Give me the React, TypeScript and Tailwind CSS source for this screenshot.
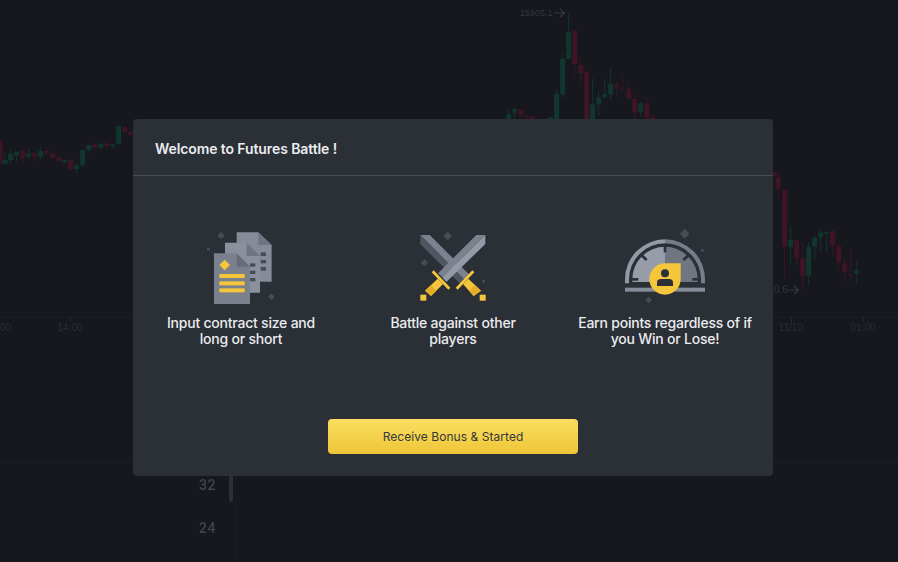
const GREEN = '#113630';
const RED = '#3f1424';

type Candle = [number, number, number, number, number, 'g' | 'r'];

// all candles as [x, wickTop, wickBottom, bodyTop, bodyBottom, colour], read off the 3x crops
const left: Candle[] = [
  [0, 423, 492, 423, 490, 'r'], [15, 460, 492, 480, 492, 'g'], [32, 447, 490, 462, 480, 'g'], [50, 455, 488, 455, 467, 'g'],
  [68, 445, 490, 453, 476, 'r'], [86, 447, 475, 462, 470, 'g'], [104, 460, 483, 460, 470, 'r'], [122, 438, 478, 453, 470, 'g'],
  [140, 442, 462, 453, 460, 'r'], [158, 455, 475, 460, 474, 'r'], [176, 465, 485, 474, 484, 'r'], [194, 480, 490, 480, 486, 'g'],
  [212, 478, 512, 478, 507, 'r'], [230, 490, 518, 497, 507, 'g'], [248, 450, 497, 450, 496, 'g'], [266, 435, 458, 435, 450, 'g'],
  [284, 425, 445, 433, 443, 'r'], [302, 431, 443, 431, 443, 'g'], [320, 422, 445, 430, 438, 'r'], [338, 432, 447, 432, 436, 'g'],
  [356, 378, 431, 378, 431, 'g'], [374, 378, 398, 382, 396, 'r'], [392, 396, 410, 396, 404, 'r'],
];

const top: Candle[] = [
  [26, 330, 357, 343, 357, 'g'], [44, 325, 357, 327, 338, 'g'], [62, 328, 352, 328, 345, 'r'], [80, 345, 357, 347, 350, 'r'],
  [98, 349, 357, 349, 357, 'r'], [152, 352, 357, 352, 357, 'g'], [170, 270, 357, 282, 357, 'g'], [188, 162, 295, 177, 283, 'g'],
  [206, 40, 177, 96, 177, 'g'], [224, 92, 230, 92, 193, 'r'], [242, 172, 260, 195, 219, 'r'], [260, 208, 357, 216, 357, 'r'],
  [278, 235, 357, 313, 357, 'g'], [296, 275, 348, 293, 313, 'g'], [314, 238, 296, 282, 291, 'g'], [332, 202, 302, 252, 282, 'g'],
  [350, 245, 292, 252, 262, 'r'], [368, 228, 270, 265, 267, 'r'], [386, 243, 297, 267, 295, 'r'], [404, 280, 355, 297, 338, 'r'],
  [422, 305, 352, 310, 335, 'g'], [440, 290, 357, 310, 355, 'r'], [458, 342, 357, 352, 357, 'r'],
];

const right: Candle[] = [
  [42, 5, 20, 5, 20, 'r'], [55, 10, 90, 23, 57, 'r'], [74, 58, 325, 58, 230, 'r'], [92, 168, 285, 210, 230, 'g'], [110, 210, 292, 210, 263, 'r'],
  [128, 218, 358, 265, 320, 'r'], [146, 215, 347, 230, 317, 'g'], [164, 195, 265, 203, 230, 'g'], [182, 175, 248, 188, 202, 'g'],
  [200, 186, 248, 186, 190, 'g'], [218, 183, 260, 183, 227, 'r'], [236, 215, 298, 228, 277, 'r'], [254, 262, 335, 280, 307, 'r'],
  [272, 238, 340, 313, 315, 'r'], [290, 275, 342, 302, 311, 'g'],
];

function Candles({ data, ox, oy }: { data: Candle[]; ox: number; oy: number }) {
  return (
    <g>
      {data.map(([x, wt, wb, bt, bb, c], i) => {
        const fill = c === 'g' ? GREEN : RED;
        const cx = ox + x / 3;
        return (
          <g key={i} fill={fill}>
            <rect x={cx - 0.5} y={oy + wt / 3} width={1} height={(wb - wt) / 3} />
            <rect x={cx - 2.5} y={oy + bt / 3} width={5} height={Math.max((bb - bt) / 3, 1)} />
          </g>
        );
      })}
    </g>
  );
}

function ChartBackdrop() {
  return (
    <svg className="absolute inset-0 blur-[0.4px]" width={898} height={562} viewBox="0 0 898 562">
      <rect x={0} y={317} width={898} height={1} fill="#1b1e23" />
      <rect x={0} y={463} width={898} height={1} fill="#1a1c21" />
      <rect x={235} y={464} width={1} height={98} fill="#1a1c21" />
      <rect x={70} y={318} width={1} height={4} fill="#25282e" />
      <rect x={791} y={318} width={1} height={4} fill="#25282e" />
      <rect x={863} y={318} width={1} height={4} fill="#25282e" />
      <Candles data={left} ox={0} oy={0} />
      <Candles data={top} ox={500} oy={0} />
      <Candles data={right} ox={760} oy={170} />
      <g fontFamily="'Liberation Sans', sans-serif" fontSize={10} fill="#2a2d33">
        <text x={70} y={331} textAnchor="middle">14:00</text>
        <text x={0} y={331}>00</text>
        <text x={791} y={331} textAnchor="middle">11/10</text>
        <text x={863} y={331} textAnchor="middle">01:00</text>
      </g>
      <g fontFamily="'Liberation Sans', sans-serif" fill="#35383e">
        <text x={520} y={16} fontSize={9}>15905.1</text>
        <text x={774} y={293} fontSize={10}>0.6</text>
      </g>
      <g stroke="#35383e" strokeWidth={1.2} fill="none">
        <path d="M554 13h10M560 9l4.500 4-4.500 4" />
        <path d="M788 290h10M794 286l4.500 4-4.500 4" />
      </g>
      <g fontFamily="Roboto, sans-serif" fontSize={14} fontWeight={500} fill="#40444c" letterSpacing={0.6}>
        <text x={199} y={490}>32</text>
        <text x={199} y={533}>24</text>
      </g>
      <rect x={229} y={470} width={4} height={32} rx={2} fill="#2b2f36" />
    </svg>
  );
}

function Diamond({ x, y, r }: { x: number; y: number; r: number }) {
  return <path d={`M${x} ${y - r}L${x + r} ${y}L${x} ${y + r}L${x - r} ${y}Z`} fill="#474d57" />;
}

function DocsIcon() {
  return (
    <svg width={100} height={90} viewBox="3 0 300 270">
      <Diamond x={93} y={47} r={11} />
      <rect x={51} y={84} width={8} height={8} fill="#474d57" />
      <Diamond x={244} y={230} r={10} />
      <path d="M140 37H205L245 75V185H140Z" fill="#858b97" />
      <path d="M205 37L245 75H205Z" fill="#6e7480" />
      <rect x={212} y={97} width={16} height={11} fill="#474d57" />
      <rect x={212} y={120} width={16} height={10} fill="#474d57" />
      <rect x={212} y={141} width={16} height={11} fill="#474d57" />
      <path d="M105 68H170L210 108V218H105Z" fill="#8b919c" />
      <path d="M170 68L210 108H170Z" fill="#6e7480" />
      <rect x={180} y={130} width={16} height={10} fill="#474d57" />
      <rect x={180} y={152} width={16} height={10} fill="#474d57" />
      <rect x={180} y={174} width={16} height={10} fill="#474d57" />
      <path d="M72 100H140L180 140V252H72Z" fill="#7a818d" />
      <path d="M140 100L180 140H140Z" fill="#666c78" />
      <path d="M104 119L120 135L104 151L88 135Z" fill="#f5c63c" />
      <rect x={88} y={162} width={76} height={12} fill="#f5c63c" />
      <rect x={88} y={184} width={76} height={12} fill="#f5c63c" />
      <rect x={88} y={205} width={76} height={12} fill="#f5c63c" />
    </svg>
  );
}

function SwordsIcon() {
  return (
    <svg width={100} height={90} viewBox="0 0 300 270">
      <Diamond x={134} y={48} r={13} />
      <Diamond x={64} y={128} r={11} />
      <rect x={238} y={179} width={8} height={8} fill="#474d57" />
      {/* blade going down to the right, sits behind */}
      <path d="M52 45H80L200 165L185 180Z" fill="#7b828e" />
      <path d="M52 45L185 180L172 192L52 72Z" fill="#4f5561" />
      {/* blade going down to the left */}
      <path d="M220 45H247L118 172L105 160Z" fill="#7b828e" />
      <path d="M247 45V72L130 186L118 172Z" fill="#959ba6" />
      {/* hilts */}
      <path d="M92 151L142 203L136 209L86 157Z" fill="#f5c63c" />
      <path d="M104 176L120 192L84 228L66 212Z" fill="#f5c63c" />
      <path d="M84 196L100 212L84 228L66 212Z" fill="#e5ae2a" />
      <rect x={52} y={224} width={18} height={18} fill="#f5c63c" />
      <path d="M208 151L158 203L164 209L214 157Z" fill="#f5c63c" />
      <path d="M196 176L180 192L212 228L234 212Z" fill="#f5c63c" />
      <path d="M216 196L198 212L212 228L234 212Z" fill="#e5ae2a" />
      <rect x={230} y={224} width={18} height={18} fill="#f5c63c" />
    </svg>
  );
}

function GaugeIcon() {
  return (
    <svg width={100} height={90} viewBox="0 0 300 270">
      <Diamond x={209} y={41} r={15} />
      <rect x={258} y={87} width={8} height={8} fill="#474d57" />
      <Diamond x={101} y={240} r={10} />
      {/* outer ring, runs a little past the half circle */}
      <path d="M30 190V178A120 120 0 0 1 150 58V70A108 108 0 0 0 42 178V190Z" fill="#949aa5" />
      <path d="M150 58A120 120 0 0 1 270 178V190H258V178A108 108 0 0 0 150 70Z" fill="#767d89" />
      {/* face */}
      <path d="M52 186V178A98 98 0 0 1 150 80V186Z" fill="#979da8" />
      <path d="M150 80A98 98 0 0 1 248 178V186H150Z" fill="#6f7682" />
      <g stroke="#2b2f36" strokeWidth={8} fill="none">
        <path d="M150 72V97" />
        <path d="M78 104L95 120" />
        <path d="M222 104L205 120" />
        <path d="M46 178H70" />
        <path d="M232 178H258" />
      </g>
      <rect x={30} y={203} width={240} height={12} fill="#858b97" />
      <path d="M150 130H197V177A47 47 0 1 1 150 130Z" fill="#f5c63c" />
      <circle cx={150} cy={160} r={12} fill="#2b2f36" />
      <path d="M126 198V188Q126 177 138 177H162Q174 177 174 188V198Z" fill="#2b2f36" />
    </svg>
  );
}

const features = [
  { icon: <DocsIcon />, lines: ['Input contract size and', 'long or short'] },
  { icon: <SwordsIcon />, lines: ['Battle against other', 'players'] },
  { icon: <GaugeIcon />, lines: ['Earn points regardless of if', 'you Win or Lose!'] },
];

export default function App() {
  return (
    <div className="relative w-[898px] h-[562px] overflow-hidden bg-[#16181d] font-['Inter',sans-serif]">
      <ChartBackdrop />

      {/* Modal */}
      <div className="absolute left-[133px] top-[119px] w-[640px] h-[357px] flex flex-col rounded bg-[#2b2f36]">
        <div className="h-[57px] px-[22px] pt-1 flex items-center border-b border-[#474d57]">
          <h1 className="text-sm font-semibold tracking-[-0.1px] text-[#eaecef]">Welcome to Futures Battle !</h1>
        </div>

        <div className="flex justify-center pt-11">
          {features.map((f) => (
            <div key={f.lines[0]} className="w-[212px] flex flex-col items-center">
              {f.icon}
              <p className="mt-[5px] text-sm leading-4 font-medium tracking-[-0.22px] text-center text-[#eaecef]">
                {f.lines[0]}
                <br />
                {f.lines[1]}
              </p>
            </div>
          ))}
        </div>

        <div className="flex justify-center mt-[72px]">
          <button className="w-[250px] h-[35px] rounded text-xs font-normal tracking-[0.05px] text-[#33373e] bg-gradient-to-b from-[#fbdf5f] to-[#eec537]">
            Receive Bonus &amp; Started
          </button>
        </div>
      </div>
    </div>
  );
}
